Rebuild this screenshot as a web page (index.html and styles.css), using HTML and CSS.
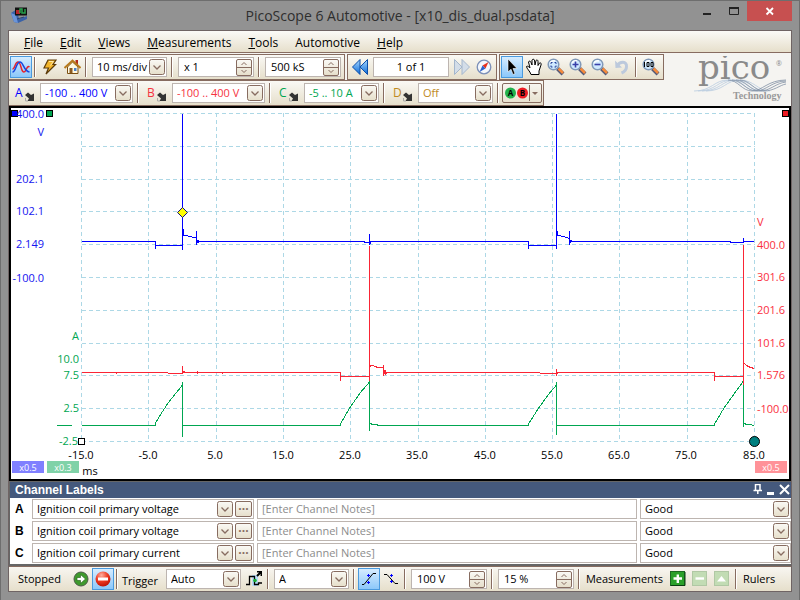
FILE: index.html
```html
<!DOCTYPE html>
<html lang="en">
<head>
    <meta charset="UTF-8">
    <meta name="viewport" content="width=device-width, initial-scale=1.0">
    <title>PicoScope 6 Automotive - [x10_dis_dual.psdata]</title>
    <link rel="stylesheet" href="styles.css">
</head>
<body>
    <svg class="defs" width="0" height="0" aria-hidden="true">
        <defs>
            <linearGradient id="btnFill" x1="0" y1="0" x2="0" y2="1">
                <stop offset="0" stop-color="#faf9f5"/>
                <stop offset="1" stop-color="#e6dfca"/>
            </linearGradient>
            <radialGradient id="redBall" cx="0.4" cy="0.25" r="0.8">
                <stop offset="0" stop-color="#ffb0a0"/>
                <stop offset="0.5" stop-color="#ee3a22"/>
                <stop offset="1" stop-color="#b81004"/>
            </radialGradient>
            <linearGradient id="blueFill" x1="0" y1="0" x2="0" y2="1">
                <stop offset="0" stop-color="#a8d8ff"/>
                <stop offset="1" stop-color="#0a6ad8"/>
            </linearGradient>
        </defs>
        <symbol id="drop" viewBox="0 0 16 16">
            <rect x="0.5" y="0.5" width="15" height="15" rx="2" fill="url(#btnFill)" stroke="#876c60"/>
            <path d="M4.5 6.5 L8 10 L11.5 6.5" fill="none" stroke="#876c60" stroke-width="1.3"/>
        </symbol>
        <symbol id="up" viewBox="0 0 14 7"><path d="M4.500 5 L7 2.500 L9.500 5" fill="none" stroke="#876c60"/></symbol>
        <symbol id="down" viewBox="0 0 14 7"><path d="M4.500 2 L7 4.500 L9.500 2" fill="none" stroke="#876c60"/></symbol>
        <symbol id="plug" viewBox="0 0 10 10">
            <path d="M0 3 L3 0.500 L6 3 L9 1.500 V9 H2.500 L4 6.500 Z" fill="#333"/>
            <path d="M0.500 6 V9 H3" stroke="#aaa" fill="none"/>
        </symbol>
        <symbol id="lens" viewBox="0 0 18 18">
            <path d="M10.500 10.500 L16 16" stroke="#555a78" stroke-width="4"/>
            <path d="M11.500 10.500 L16 15" stroke="#f58a3c" stroke-width="2.500"/>
            <circle cx="6.500" cy="6.500" r="5.300" fill="#cfe9ff" stroke="#8199b8" stroke-width="1.500"/>
            <path d="M3 5.500 A4 4 0 0 1 8 3" stroke="#fff" stroke-width="1.500" fill="none"/>
        </symbol>
    </svg>

    <div class="window">
        <header class="titlebar">
            <svg class="app-icon" width="18" height="17" viewBox="0 0 18 17">
                <path d="M1 6 L7 2 L9 12 L17 9 V12 L8 16 L4 15 Z" fill="#3a62a8"/>
                <path d="M1 6 L4 15 L8 16 L6 8 Z" fill="#6a94d8"/>
                <rect x="5" y="0.500" width="12" height="8" fill="#111"/>
                <rect x="6" y="3" width="4" height="4" fill="#b3262c"/>
                <path d="M10 6 V2 H12 V6 H15 V2" fill="none" stroke="#27a14c" stroke-width="1.500"/>
                <path d="M7 12 L14 10" stroke="#28406e"/>
            </svg>
            <h1>PicoScope 6 Automotive - [x10_dis_dual.psdata]</h1>
            <div class="window-buttons">
                <button type="button" aria-label="Minimize"><svg width="10" height="10"><rect x="1" y="7" width="8" height="2" fill="#222"/></svg></button>
                <button type="button" aria-label="Maximize"><svg width="10" height="10"><path d="M0.500 1 V8.500 H9.500 V1" fill="none" stroke="#222"/><rect width="10" height="2" y="1" fill="#222"/></svg></button>
                <button type="button" class="close" aria-label="Close"><svg width="10" height="10"><path d="M1.500 2 L8 8.500 M8 2 L1.500 8.500" stroke="#fff" stroke-width="1.800"/></svg></button>
            </div>
        </header>

        <main class="client">
            <nav class="menubar">
                <a href="#"><u>F</u>ile</a>
                <a href="#"><u>E</u>dit</a>
                <a href="#"><u>V</u>iews</a>
                <a href="#"><u>M</u>easurements</a>
                <a href="#"><u>T</u>ools</a>
                <a href="#">Automotive</a>
                <a href="#"><u>H</u>elp</a>
            </nav>

            <div class="toolbars">
                <div class="toolbar-rows">
                    <div class="toolbar-row">
                        <div class="strip">
                            <button type="button" class="tool active" aria-label="Scope mode">
                                <svg width="18" height="16" viewBox="0 0 18 16" fill="none" stroke-width="1.500"><path d="M0.500 10 C3 10 3 3 6 3 C9.500 3 8.500 13 12 13 C14.500 13 14.500 6 17.500 8" stroke="#e8232b"/><path d="M0.500 13 C4 13 4 3 8 3 C11.500 3 11.500 12 17.500 13" stroke="#1746e0"/></svg>
                            </button>
                            <span class="sep"></span>
                            <button type="button" class="tool" aria-label="Auto setup">
                                <svg width="16" height="16" viewBox="0 0 16 16"><path d="M6 1 H14 L11 5.500 H13.500 L4 15 L6.500 9 H2 Z" fill="#f2b52b" stroke="#5c3b0a" stroke-width="1.200"/><path d="M7 2.500 H11.500 L8.500 6.500" stroke="#ffe9a8" fill="none"/></svg>
                            </button>
                            <button type="button" class="tool" aria-label="Home">
                                <svg width="17" height="16" viewBox="0 0 17 16"><path d="M11.500 1 H14 V6 H11.500 Z" fill="#b32a1c"/><path d="M3.500 8 V14.500 H14 V8 L8.500 3 Z" fill="#fff8e0" stroke="#7a4e10"/><path d="M0.500 9 L8.500 1.500 L16.500 9" fill="none" stroke="#b77a1c" stroke-width="2"/><rect x="5.500" y="9" width="3" height="5" fill="#8a5a20"/><rect x="10" y="9" width="2.500" height="3" fill="#4a80c8"/></svg>
                            </button>
                            <span class="sep"></span>
                            <span class="combo w75"><select aria-label="Timebase"><option>10 ms/div</option></select><svg width="16" height="16"><use href="#drop"/></svg></span>
                            <span class="sep"></span>
                            <span class="number"><input type="text" value="x 1" aria-label="Zoom factor"><span class="spin"><button type="button" aria-label="Up"><svg width="14" height="7"><use href="#up"/></svg></button><button type="button" aria-label="Down"><svg width="14" height="7"><use href="#down"/></svg></button></span></span>
                            <span class="sep"></span>
                            <span class="number"><input type="text" value="500 kS" aria-label="Samples"><span class="spin"><button type="button" aria-label="Up"><svg width="14" height="7"><use href="#up"/></svg></button><button type="button" aria-label="Down"><svg width="14" height="7"><use href="#down"/></svg></button></span></span>
                        </div>
                        <div class="strip">
                            <button type="button" class="tool" aria-label="Previous waveform">
                                <svg width="16" height="16" viewBox="0 0 16 16"><path d="M8 0.500 V15.500 L0.500 8 Z M15.500 0.500 V15.500 L8 8 Z" fill="url(#blueFill)" stroke="#0c4ea8"/></svg>
                            </button>
                            <input type="text" class="box page" value="1 of 1" aria-label="Waveform">
                            <button type="button" class="tool" aria-label="Next waveform">
                                <svg width="16" height="16" viewBox="0 0 16 16"><path d="M0.500 0.500 V15.500 L8 8 Z M8 0.500 V15.500 L15.500 8 Z" fill="#d3dde8" stroke="#a4b6cc"/></svg>
                            </button>
                            <button type="button" class="tool" aria-label="Navigator">
                                <svg width="16" height="16" viewBox="0 0 16 16"><circle cx="8" cy="8" r="6.800" fill="#f4f7fc" stroke="#7b8fb8" stroke-width="1.300"/><path d="M12.500 3 L9.500 9.500 L6.500 6.500 Z" fill="#e8301c"/><path d="M3.500 13 L9.500 9.500 L6.500 6.500 Z" fill="#2d63cc"/></svg>
                            </button>
                        </div>
                        <div class="strip">
                            <button type="button" class="tool active" aria-label="Select">
                                <svg width="16" height="18" viewBox="0 0 16 18"><path d="M4 1 V14 L7 11.200 L9 16.500 L11 15.600 L9 10.500 H13 Z" fill="#000" stroke="#fff" stroke-width="0.600"/></svg>
                            </button>
                            <button type="button" class="tool" aria-label="Hand">
                                <svg width="18" height="18" viewBox="0 0 18 18"><path d="M6 16.500 C5 13 1.500 10.500 1.500 8.500 C2.500 7.500 4 9 5 10 L3.500 4 C4 2.500 5.500 3 6 4.500 L7 7 V2 C7.500 1 9 1 9.500 2 L10 7 L11 2.500 C12 1.500 13 2 13 3.500 L13 7.500 L14.500 5 C16 4.500 16.500 5.500 16 7 L14 13 V16.500 Z" fill="#fff" stroke="#000"/></svg>
                            </button>
                            <button type="button" class="tool" aria-label="Zoom window">
                                <svg width="18" height="18" viewBox="0 0 18 18"><use href="#lens"/><path d="M4 6 V4.500 H5.500 M7.500 4.500 H9 V6 M9 7.500 V9 H7.500 M5.500 9 H4 V7.500" fill="none" stroke="#23419a"/></svg>
                            </button>
                            <button type="button" class="tool" aria-label="Zoom in">
                                <svg width="18" height="18" viewBox="0 0 18 18"><use href="#lens"/><path d="M3.500 6.500 H9.500 M6.500 3.500 V9.500" stroke="#3a3fa8" stroke-width="1.600"/></svg>
                            </button>
                            <button type="button" class="tool" aria-label="Zoom out">
                                <svg width="18" height="18" viewBox="0 0 18 18"><use href="#lens"/><path d="M3.500 6.500 H9.500" stroke="#3a3fa8" stroke-width="1.600"/></svg>
                            </button>
                            <button type="button" class="tool" aria-label="Undo zoom">
                                <svg width="16" height="16" viewBox="0 0 16 16"><path d="M3 7 C6 2 13 2 12.500 7.500 C12.500 11 10 13 7.500 14" fill="none" stroke="#bcc9dc" stroke-width="3"/><path d="M1 1.500 L1.500 9 L8 8.500 Z" fill="#bcc9dc"/></svg>
                            </button>
                            <span class="sep"></span>
                            <button type="button" class="tool" aria-label="Zoom 100%">
                                <svg width="18" height="18" viewBox="0 0 18 18"><use href="#lens"/><path d="M2.500 4 V9 M5 4.500 H7 V8.500 H5 Z M9 4.500 H11 V8.500 H9 Z" fill="none" stroke="#000"/></svg>
                            </button>
                        </div>
                    </div>
                    <div class="toolbar-row">
                        <div class="strip">
                            <button type="button" class="channel blue">A<svg width="10" height="10"><use href="#plug"/></svg></button>
                            <span class="combo w93 blue"><select aria-label="Channel A range"><option>-100 .. 400 V</option></select><svg width="16" height="16"><use href="#drop"/></svg></span>
                            <span class="sep"></span>
                            <button type="button" class="channel red">B<svg width="10" height="10"><use href="#plug"/></svg></button>
                            <span class="combo w93 red"><select aria-label="Channel B range"><option>-100 .. 400 V</option></select><svg width="16" height="16"><use href="#drop"/></svg></span>
                            <span class="sep"></span>
                            <button type="button" class="channel green">C<svg width="10" height="10"><use href="#plug"/></svg></button>
                            <span class="combo w75 green"><select aria-label="Channel C range"><option>-5 .. 10 A</option></select><svg width="16" height="16"><use href="#drop"/></svg></span>
                            <span class="sep"></span>
                            <button type="button" class="channel gold">D<svg width="10" height="10"><use href="#plug"/></svg></button>
                            <span class="combo w75 gold"><select aria-label="Channel D range"><option>Off</option></select><svg width="16" height="16"><use href="#drop"/></svg></span>
                            <span class="sep"></span>
                            <button type="button" class="math" aria-label="Channel options">
                                <svg width="38" height="18" viewBox="0 0 38 18"><circle cx="7.500" cy="9" r="5.500" fill="#22b14c"/><circle cx="19.500" cy="9" r="5.500" fill="#ed1c24"/><text class="tiny" x="7.500" y="12" text-anchor="middle">A</text><text class="tiny" x="19.500" y="12" text-anchor="middle">B</text><path d="M26.500 1 V17" stroke="#876c60"/><path d="M29 8 H35 L32 11 Z" fill="#876c60"/></svg>
                            </button>
                        </div>
                    </div>
                </div>
                <svg class="logo" width="98" height="48" viewBox="0 0 98 48" role="img" aria-label="pico Technology">
                    <text class="logo-name" x="6" y="23">pico</text>
                    <text class="logo-mark" x="84" y="10">®</text>
                    <g fill="none" stroke="#b9cbe0" stroke-width="0.800">
                        <path d="M2 35 C20 35 22 24 36 24 S54 35 66 35"/>
                        <path d="M6 35 C24 35 26 24 40 24 S58 35 70 35"/>
                        <path d="M10 35 C28 35 30 24 44 24 S62 35 74 35"/>
                        <path d="M14 35 C32 35 34 24 48 24 S66 35 78 35"/>
                    </g>
                    <g fill="none" stroke="#8290a4" stroke-width="0.800">
                        <path d="M36 24 C46 24 50 35 60 35 S76 24 94 24"/>
                        <path d="M40 24 C50 24 54 35 64 35 S80 25 94 25"/>
                        <path d="M44 24 C54 24 58 35 68 35 S84 27 94 26"/>
                        <path d="M48 24 C58 24 62 35 72 35 S88 29 94 28"/>
                    </g>
                    <text class="logo-sub" x="41" y="43">Technology</text>
                </svg>
            </div>

            <section class="scope">
                <svg viewBox="11 108 778 371" role="img" aria-label="Waveforms of channels A, B and C">
                    <g class="grid">
                        <path d="M81.500 113 V441 M148.500 113 V441 M216.500 113 V441 M283.500 113 V441 M350.500 113 V441 M418.500 113 V441 M485.500 113 V441 M552.500 113 V441 M619.500 113 V441 M687.500 113 V441 M754.500 113 V441"/>
                        <path d="M82 113.500 H755 M82 146.500 H755 M82 179.500 H755 M82 211.500 H755 M82 244.500 H755 M82 277.500 H755 M82 310.500 H755 M82 343.500 H755 M82 375.500 H755 M82 408.500 H755 M82 441.500 H755"/>
                    </g>
                    <g class="trace green-line">
                        <path d="M57 425.500 H72 M82 425.500 H155.500 V423 L160 415.500 L168 403 L182.500 385 V382 V437 V425.500 H340.500 V424 L349 409 L360 393 L369.500 382 V431 V423.500 H371 L372 424.500 H377 L378 425.500 H528.500 V424 L538 409 L548 395 L556.500 385 V382 V435 V425.500 H714.500 V424 L724 408 L734 394 L743.500 381 V427 V423.500 H745 L746 424.500 H750 L754 425.500"/>
                    </g>
                    <g class="trace red-line">
                        <path d="M82 372.500 H168 M168 373.500 H182.500 V366 V374 L184 371 V372.500 H340.500 V381 V376.500 H369.500 V246 V381 V362 V367 L371 365.500 H373 L375 366.500 L378 367.500 H383.500 V365 V376 L385 370 V375 L387 372.500 H540 M540 373.500 H556.500 V369 V375 L558 372.500 H714.500 V381 V376.500 H743.500 V245 V385 V363 L748 366.500 L754 368.500 M116 373.500 H117 M197 371 V374 M222 373 H223"/>
                    </g>
                    <g class="trace blue-line">
                        <path d="M82 241.500 H155.500 V249 V245.500 H182.500 V114 V250 V229 H183.500 V235 L190 236.500 L196.500 238 V231 V245 L198 240 V243 L199 241.500 H364 V242.500 H369.500 V234 V245 L371 241.500 H528.500 V249 V245.500 H556.500 V114 V249 V231 H557.500 V235 L563 236.500 L569.500 238.500 V231 V245 L571 240 L572 241.500 H730 V242.500 H743.500 V238 V242 V241.500 H754"/>
                    </g>
                    <path d="M182.500 207.500 L187.500 212.500 L182.500 217.500 L177.500 212.500 Z" fill="#ff0" stroke="#101080"/>
                    <g stroke="#000">
                        <rect x="11.500" y="110.500" width="6" height="6" fill="#00f"/>
                        <rect x="46.500" y="110.500" width="6" height="6" fill="#00a651"/>
                        <rect x="782.500" y="110.500" width="6" height="6" fill="#ed1c24"/>
                        <rect x="78.500" y="438.500" width="6" height="6" fill="#fff"/>
                        <circle cx="754.500" cy="441.500" r="5" fill="#008080"/>
                    </g>
                    <g class="blue-fill" text-anchor="end">
                        <text x="44" y="118">400.0</text>
                        <text x="44" y="136">V</text>
                        <text x="44" y="183">202.1</text>
                        <text x="44" y="215">102.1</text>
                        <text x="44" y="248">2.149</text>
                        <text x="44" y="282">-100.0</text>
                    </g>
                    <g class="green-fill" text-anchor="end">
                        <text x="79" y="340">A</text>
                        <text x="79" y="363">10.0</text>
                        <text x="79" y="379">7.5</text>
                        <text x="79" y="412">2.5</text>
                        <text x="78" y="445">-2.5</text>
                    </g>
                    <g class="red-fill">
                        <text x="757" y="226">V</text>
                        <text x="757" y="249">400.0</text>
                        <text x="757" y="281">301.6</text>
                        <text x="757" y="314">201.6</text>
                        <text x="757" y="347">101.6</text>
                        <text x="757" y="379">1.576</text>
                        <text x="757" y="413">-100.0</text>
                    </g>
                    <g text-anchor="middle">
                        <text x="81" y="459">-15.0</text>
                        <text x="148" y="459">-5.0</text>
                        <text x="215" y="459">5.0</text>
                        <text x="283" y="459">15.0</text>
                        <text x="350" y="459">25.0</text>
                        <text x="417" y="459">35.0</text>
                        <text x="485" y="459">45.0</text>
                        <text x="552" y="459">55.0</text>
                        <text x="619" y="459">65.0</text>
                        <text x="686" y="459">75.0</text>
                        <text x="754" y="459">85.0</text>
                        <text x="90" y="475">ms</text>
                    </g>
                    <rect x="12" y="461" width="32" height="12" fill="#8080ff"/>
                    <rect x="47" y="461" width="32" height="12" fill="#80d2a8"/>
                    <rect x="755" y="461" width="32" height="12" fill="#ff9298"/>
                    <g class="scale" text-anchor="middle">
                        <text x="28" y="471">x0.5</text>
                        <text x="63" y="471">x0.3</text>
                        <text x="771" y="471">x0.5</text>
                    </g>
                </svg>
            </section>

            <section class="labels-panel">
                <div class="panel-header">
                    <h2>Channel Labels</h2>
                    <button type="button" aria-label="Pin"><svg width="10" height="12"><path d="M2.500 6 V0.500 H7 V6 M0.500 6.500 H9 M4.800 6 V10" fill="none" stroke="#fff" stroke-width="1.500"/></svg></button>
                    <button type="button" aria-label="Minimize panel"><svg width="10" height="12"><rect x="1" y="8" width="7" height="3" fill="#fff"/></svg></button>
                    <button type="button" aria-label="Close panel"><svg width="11" height="12"><path d="M1 1 L10 10 M10 1 L1 10" stroke="#fff" stroke-width="2"/></svg></button>
                </div>
                <div class="panel-body">
                    <div class="panel-row">
                        <label for="labelA">A</label>
                        <span class="combo"><select id="labelA"><option>Ignition coil primary voltage</option></select><span class="pair"><svg width="16" height="16"><use href="#drop"/></svg><button type="button" class="more" aria-label="Edit label A">···</button></span></span>
                        <input type="text" class="box" placeholder="[Enter Channel Notes]" aria-label="Notes A">
                        <span class="combo"><select aria-label="Result A"><option>Good</option></select><svg width="16" height="16"><use href="#drop"/></svg></span>
                    </div>
                    <div class="panel-row">
                        <label for="labelB">B</label>
                        <span class="combo"><select id="labelB"><option>Ignition coil primary voltage</option></select><span class="pair"><svg width="16" height="16"><use href="#drop"/></svg><button type="button" class="more" aria-label="Edit label B">···</button></span></span>
                        <input type="text" class="box" placeholder="[Enter Channel Notes]" aria-label="Notes B">
                        <span class="combo"><select aria-label="Result B"><option>Good</option></select><svg width="16" height="16"><use href="#drop"/></svg></span>
                    </div>
                    <div class="panel-row">
                        <label for="labelC">C</label>
                        <span class="combo"><select id="labelC"><option>Ignition coil primary current</option></select><span class="pair"><svg width="16" height="16"><use href="#drop"/></svg><button type="button" class="more" aria-label="Edit label C">···</button></span></span>
                        <input type="text" class="box" placeholder="[Enter Channel Notes]" aria-label="Notes C">
                        <span class="combo"><select aria-label="Result C"><option>Good</option></select><svg width="16" height="16"><use href="#drop"/></svg></span>
                    </div>
                </div>
            </section>

            <footer class="statusbar">
                <span class="status-text stopped">Stopped</span>
                <button type="button" class="tool" aria-label="Start">
                    <svg width="16" height="16" viewBox="0 0 16 16"><circle cx="8" cy="8" r="7" fill="#3f9a2c" stroke="#4b5a48"/><path d="M4 6.500 H7.500 V3.500 L12.500 8 L7.500 12.500 V9.500 H4 Z" fill="#fff" stroke="#2c6a20" stroke-width="0.700"/></svg>
                </button>
                <button type="button" class="tool active" aria-label="Stop">
                    <svg width="16" height="16" viewBox="0 0 16 16"><circle cx="8" cy="8" r="7.500" fill="url(#redBall)"/><rect x="3" y="6.500" width="10" height="3" fill="#fff"/></svg>
                </button>
                <span class="sep"></span>
                <label class="status-text trigger" for="trigger">Trigger</label>
                <span class="combo w75"><select id="trigger"><option>Auto</option></select><svg width="16" height="16"><use href="#drop"/></svg></span>
                <button type="button" class="tool" aria-label="Advanced trigger">
                    <svg width="16" height="16" viewBox="0 0 16 16"><rect x="6" y="4" width="6" height="11" fill="#b8dcf8"/><path d="M0 13.500 H3.500 V5.500 H8.500 V13.500 H12.500 V12 H16" fill="none" stroke="#000" stroke-width="1.300"/><circle cx="9" cy="9.500" r="1.800" fill="#18b030"/><path d="M11 5 L15 1 M11 0.500 H15.500 V5" stroke="#000" stroke-width="2" fill="none"/></svg>
                </button>
                <span class="sep"></span>
                <span class="combo w75"><select aria-label="Trigger source"><option>A</option></select><svg width="16" height="16"><use href="#drop"/></svg></span>
                <span class="sep"></span>
                <button type="button" class="tool active" aria-label="Rising edge">
                    <svg width="16" height="16" viewBox="0 0 16 16"><path d="M1 13.500 H3 L12 2.500 H15" fill="none" stroke="#000"/><path d="M7.500 3 V6 M6 4.500 H9 M7.500 10 V13 M6 11.500 H9" stroke="#00f"/></svg>
                </button>
                <button type="button" class="tool" aria-label="Falling edge">
                    <svg width="16" height="16" viewBox="0 0 16 16"><path d="M1 3.500 H4 L12 12.500 H15" fill="none" stroke="#000"/><path d="M8.500 3 V6 M7 4.500 H10 M8.500 9 V12 M7 10.500 H10" stroke="#00f"/></svg>
                </button>
                <span class="sep"></span>
                <span class="number"><input type="text" value="100 V" aria-label="Threshold"><span class="spin"><button type="button" aria-label="Up"><svg width="14" height="7"><use href="#up"/></svg></button><button type="button" aria-label="Down"><svg width="14" height="7"><use href="#down"/></svg></button></span></span>
                <span class="sep"></span>
                <span class="number"><input type="text" value="15 %" aria-label="Pre-trigger"><span class="spin"><button type="button" aria-label="Up"><svg width="14" height="7"><use href="#up"/></svg></button><button type="button" aria-label="Down"><svg width="14" height="7"><use href="#down"/></svg></button></span></span>
                <span class="sep"></span>
                <span class="status-text">Measurements</span>
                <button type="button" class="tool" aria-label="Add measurement">
                    <svg width="16" height="16" viewBox="0 0 16 16"><rect x="0.500" y="0.500" width="14" height="14" fill="#2aa02a" stroke="#1b6a22"/><path d="M1 14.500 H15 V1" fill="none" stroke="#0a3e12"/><path d="M3.500 7.500 H12 M7.800 3.500 V12" stroke="#fff" stroke-width="2.400"/></svg>
                </button>
                <button type="button" class="tool" aria-label="Delete measurement" disabled>
                    <svg width="16" height="16" viewBox="0 0 16 16"><rect x="0.500" y="0.500" width="14" height="14" fill="#c2dcb4" stroke="#b0c8a4"/><path d="M3.500 7.500 H12" stroke="#fff" stroke-width="2.400"/></svg>
                </button>
                <button type="button" class="tool" aria-label="Edit measurement" disabled>
                    <svg width="16" height="16" viewBox="0 0 16 16"><rect x="0.500" y="0.500" width="14" height="14" fill="#c2dcb4" stroke="#b0c8a4"/><path d="M3 10.500 L7.500 5 L12 10.500 Z" fill="#fff"/></svg>
                </button>
                <span class="sep"></span>
                <span class="status-text">Rulers</span>
            </footer>
        </main>
    </div>
</body>
</html>
```

FILE: styles.css
```css
* {
    box-sizing: border-box;
}
body {
    margin: 0;
    font-family: "Open Sans", "Liberation Sans", sans-serif;
    font-size: 12px;
    line-height: 16px;
    color: #000;
}
button,
input,
select {
    font: inherit;
    color: inherit;
    margin: 0;
    padding: 0;
    border: none;
    background: none;
    min-width: 0;
}
svg {
    display: block;
    flex: none;
}
.defs {
    position: absolute;
}
.window {
    min-height: 100vh;
    background-color: #929292;
    border: 1px solid #6e6e6e;
    padding: 0 7px 8px 7px;
}
.titlebar {
    display: grid;
    grid-template-columns: 110px 1fr 110px;
    height: 29px;
}
.app-icon {
    margin: 6px 0 0 2px;
}
.titlebar h1 {
    margin: 0;
    font-size: 14px;
    font-weight: normal;
    line-height: 30px;
    text-align: center;
    white-space: nowrap;
    color: #2e2e2e;
}
.window-buttons {
    display: flex;
    justify-content: flex-end;
    align-items: flex-start;
}
.window-buttons button {
    display: flex;
    align-items: center;
    justify-content: center;
    width: 27px;
    height: 20px;
}
.window-buttons .close {
    width: 45px;
    background-color: #c75050;
}
.client {
    border: 1px solid #6f6464;
    background-color: #f5f4f1;
}
.menubar {
    display: flex;
    gap: 17px;
    height: 22px;
    padding: 0 15px;
    line-height: 24px;
    background: linear-gradient(#fbfaf7, #e6dfcb);
    border-bottom: 1px solid #876c60;
}
.menubar a {
    color: #000;
    text-decoration: none;
}
.toolbars {
    display: flex;
    justify-content: space-between;
    padding-top: 1px;
}
.toolbar-row {
    display: flex;
    gap: 2px;
}
.strip {
    display: flex;
    align-items: center;
    height: 26px;
    padding: 0 1px;
    background: linear-gradient(#faf9f5, #e6dfcb);
    border: 1px solid #876c60;
    border-left-width: 0;
}
.strip + .strip {
    border-left-width: 1px;
}
.tool {
    display: flex;
    flex: none;
    align-items: center;
    justify-content: center;
    width: 22px;
    height: 22px;
}
.tool.active {
    background: linear-gradient(#d6ecff, #8cc8fa);
    border: 1px solid #4a9ade;
}
.sep {
    flex: none;
    width: 2px;
    height: 20px;
    margin: 0 3px 0 2px;
    border-left: 1px solid #876c60;
    border-right: 1px solid #fff;
}
.combo,
.number,
.box {
    height: 20px;
    background-color: #fff;
    border: 1px solid #bdb5b0;
}
.combo {
    display: grid;
    flex: none;
    align-items: center;
    margin: 0 2px;
}
.combo > * {
    grid-area: 1 / 1;
}
.combo select {
    width: 100%;
    height: 18px;
    padding-left: 4px;
    appearance: none;
    font-size: 11px;
}
.combo > svg,
.pair {
    justify-self: end;
    margin-right: 1px;
    pointer-events: none;
}
.number {
    display: flex;
    flex: none;
    align-items: center;
    width: 76px;
    margin: 0 2px;
    padding-right: 1px;
}
.number input {
    flex: 1;
    height: 18px;
    padding: 0 0 2px 5px;
    font-size: 11px;
}
.spin {
    display: grid;
    border: 1px solid #876c60;
    border-radius: 2px;
    background: linear-gradient(#faf9f5, #e6dfcb);
}
.spin button {
    display: block;
    height: 7px;
}
.spin button + button {
    height: 8px;
    border-top: 1px solid #876c60;
}
.w75 {
    width: 75px;
}
.w93 {
    width: 93px;
}
.box {
    padding: 0 4px 2px 4px;
    font-size: 11px;
}
.page {
    width: 76px;
    margin: 0 2px;
    text-align: center;
}
.channel {
    display: flex;
    align-items: center;
    justify-content: space-between;
    width: 28px;
    height: 20px;
    padding-left: 5px;
}
.channel svg {
    margin: 8px 3px 0 0;
}
.math {
    border: 1px solid #876c60;
    border-radius: 2px;
}
.tiny {
    font-size: 8px;
    font-weight: bold;
}
.blue {
    color: #00f;
}
.red {
    color: #f5333f;
}
.green {
    color: #00a651;
}
.gold {
    color: #c08a1e;
}
.logo {
    margin: 2px 1px 0 0;
}
.logo-name {
    font-family: "DejaVu Serif", serif;
    font-size: 34px;
    fill: #8a8a8a;
}
.logo-mark {
    font-size: 7px;
    fill: #8a8a8a;
}
.logo-sub {
    font-family: "Liberation Serif", serif;
    font-size: 10px;
    font-weight: bold;
    fill: #999;
}
.scope {
    border: 2px solid #000;
    background-color: #fff;
}
.scope > svg {
    width: 100%;
    height: auto;
    font-size: 11px;
}
.grid {
    fill: none;
    stroke: #add8e6;
    stroke-dasharray: 4 3;
    shape-rendering: crispEdges;
}
.trace {
    fill: none;
    stroke-width: 1px;
    shape-rendering: crispEdges;
}
.blue-line {
    stroke: #00f;
}
.red-line {
    stroke: #fa2535;
}
.green-line {
    stroke: #00a651;
}
.blue-fill {
    fill: #1414f0;
}
.red-fill {
    fill: #fa2f40;
}
.green-fill {
    fill: #00a651;
}
.scale {
    font-size: 9px;
    fill: #fff;
}
.labels-panel {
    border: 1px solid #666;
    border-width: 1px 0 2px 1px;
    background-color: #fff;
}
.panel-header {
    display: flex;
    align-items: center;
    gap: 3px;
    height: 16px;
    padding: 0 1px 0 5px;
    color: #fff;
    background-color: #45597c;
}
.panel-header h2 {
    flex: 1;
    margin: 0;
    font-family: "Liberation Sans", sans-serif;
    font-size: 12px;
    line-height: 18px;
}
.panel-body {
    display: grid;
    gap: 2px;
    padding: 1px 0;
}
.panel-row {
    display: grid;
    grid-template-columns: 14px 222px 1fr 151px;
    column-gap: 3px;
    padding-left: 5px;
    align-items: center;
}
.panel-row label {
    font-family: "Liberation Sans", sans-serif;
    font-size: 12px;
    font-weight: bold;
}
.panel-row .combo {
    margin: 0;
}
.panel-row .box::placeholder {
    color: #8c8c8c;
    opacity: 1;
}
.pair {
    display: flex;
    gap: 2px;
}
.more {
    width: 17px;
    height: 16px;
    border: 1px solid #876c60;
    border-radius: 2px;
    background: linear-gradient(#faf9f5, #e6dfcb);
    color: #876c60;
    font-weight: bold;
    line-height: 12px;
    pointer-events: auto;
}
.statusbar {
    display: flex;
    align-items: center;
    height: 25px;
    background: linear-gradient(#f8f6f1, #e6dfcb);
    border-top: 1px solid #876c60;
    white-space: nowrap;
}
.status-text {
    margin: 0 4px 0 3px;
    font-size: 11px;
}
.stopped {
    margin: 0 9px;
}
.trigger {
    margin: 4px 6px 0 1px;
}
```
